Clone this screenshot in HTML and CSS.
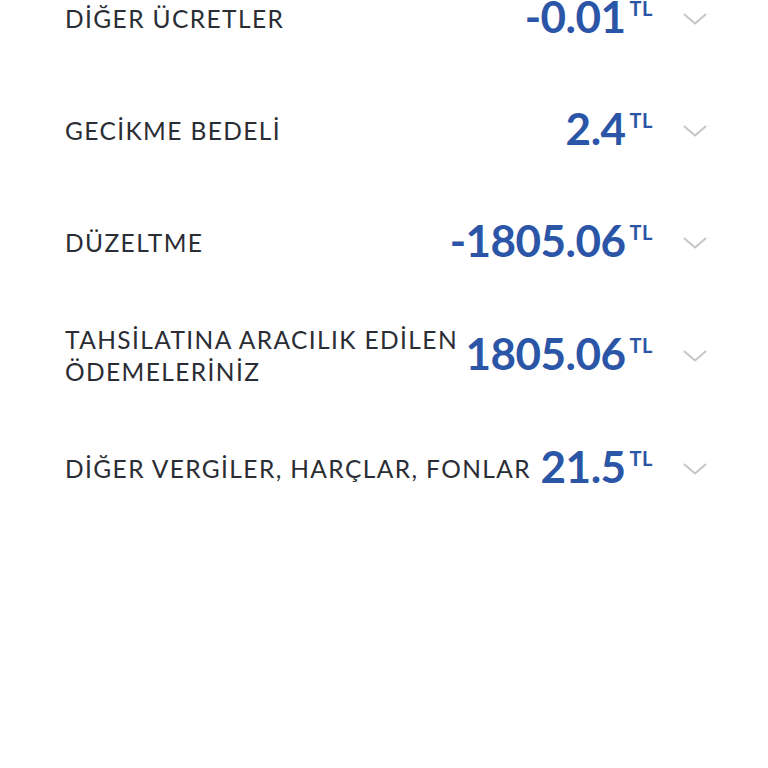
FILE: index.html
```html
<!DOCTYPE html>
<html lang="tr">
<head>
<meta charset="utf-8">
<title>Ücretler</title>
<link rel="stylesheet" href="styles.css">
</head>
<body>
<ul class="list">
  <li class="row">
    <span class="label">DİĞER ÜCRETLER</span>
    <span class="amount"><span class="num">-0.01</span><span class="cur">TL</span></span>
    <svg class="chev" viewBox="0 0 24 12" width="24" height="12"><polyline points="1.5,1.5 12,10.5 22.5,1.5"/></svg>
  </li>
  <li class="row">
    <span class="label">GECİKME BEDELİ</span>
    <span class="amount"><span class="num">2.4</span><span class="cur">TL</span></span>
    <svg class="chev" viewBox="0 0 24 12" width="24" height="12"><polyline points="1.5,1.5 12,10.5 22.5,1.5"/></svg>
  </li>
  <li class="row">
    <span class="label">DÜZELTME</span>
    <span class="amount"><span class="num">-1805.06</span><span class="cur">TL</span></span>
    <svg class="chev" viewBox="0 0 24 12" width="24" height="12"><polyline points="1.5,1.5 12,10.5 22.5,1.5"/></svg>
  </li>
  <li class="row">
    <span class="label">TAHSİLATINA ARACILIK EDİLEN<br>ÖDEMELERİNİZ</span>
    <span class="amount"><span class="num">1805.06</span><span class="cur">TL</span></span>
    <svg class="chev" viewBox="0 0 24 12" width="24" height="12"><polyline points="1.5,1.5 12,10.5 22.5,1.5"/></svg>
  </li>
  <li class="row">
    <span class="label">DİĞER VERGİLER, HARÇLAR, FONLAR</span>
    <span class="amount"><span class="num">21.5</span><span class="cur">TL</span></span>
    <svg class="chev" viewBox="0 0 24 12" width="24" height="12"><polyline points="1.5,1.5 12,10.5 22.5,1.5"/></svg>
  </li>
</ul>
</body>
</html>
```

FILE: styles.css
```css
html, body {
  margin: 0;
  padding: 0;
  background: #ffffff;
}

body {
  font-family: "Lato", "Liberation Sans", sans-serif;
  width: 768px;
  height: 768px;
  overflow: hidden;
}

.list {
  list-style: none;
  margin: -37px 0 0 0;
  padding: 0;
}

.row {
  display: flex;
  align-items: center;
  padding: 25px 61px 25px 65px;
}

.label {
  flex: 1 1 auto;
  min-width: 0;
  white-space: nowrap;
  font-size: 24.5px;
  line-height: 32px;
  letter-spacing: 1.4px;
  color: #2a2d34;
  margin-right: 10px;
}

.amount {
  flex: 0 0 auto;
  display: flex;
  align-items: flex-start;
  padding-bottom: 6px;
  color: #2b55a6;
  font-weight: 700;
}

.num {
  font-size: 44px;
  line-height: 56px;
  letter-spacing: -0.5px;
}

.cur {
  font-size: 20px;
  line-height: 20px;
  margin-top: 10px;
  margin-left: 4px;
  letter-spacing: 0.5px;
}

.chev {
  flex: 0 0 auto;
  margin-left: 30px;
  fill: none;
  stroke: #c6c6c6;
  stroke-width: 2;
  stroke-linecap: round;
  stroke-linejoin: round;
}
```
